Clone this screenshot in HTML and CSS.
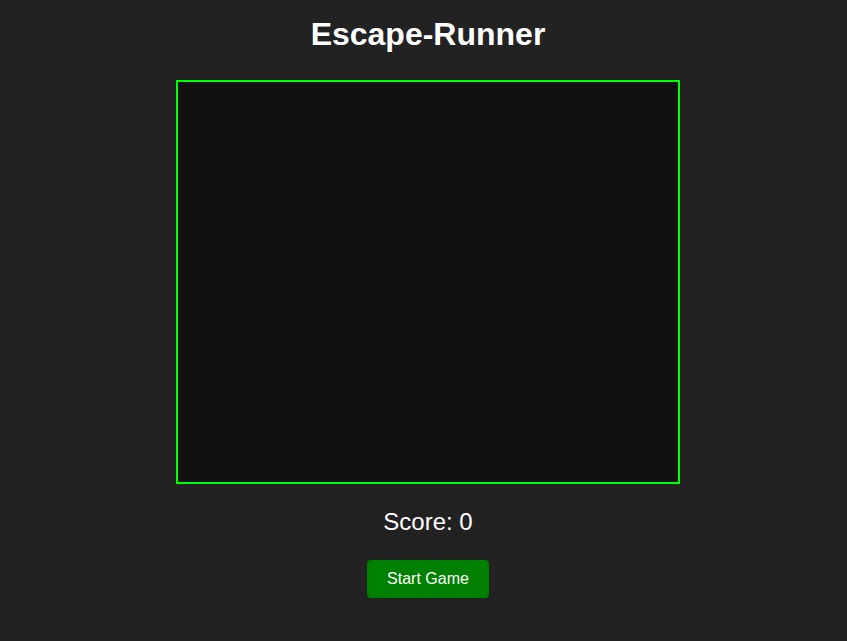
FILE: index.html
```html
<!DOCTYPE html>
<html lang="en">
<head>
<meta charset="utf-8">
<title>Escape-Runner</title>
<link rel="stylesheet" href="styles.css">
</head>
<body>
<main class="game">
  <h1 class="title">Escape-Runner</h1>
  <div class="board"></div>
  <p class="score">Score: 0</p>
  <button class="start">Start Game</button>
</main>
</body>
</html>
```

FILE: styles.css
```css
html, body {
  margin: 0;
  padding: 0;
  background: #222222;
}
body {
  font-family: "Liberation Sans", Arial, sans-serif;
  color: #ffffff;
}
.game {
  display: flex;
  flex-direction: column;
  align-items: center;
  padding-left: 9px;
  padding-top: 16px;
}
.title {
  margin: 0 0 27px;
  font-size: 32px;
  font-weight: bold;
  line-height: normal;
}
.board {
  width: 500px;
  height: 400px;
  background: #111111;
  border: 2px solid #00ff00;
}
.score {
  margin: 24px 0;
  font-size: 24px;
  line-height: normal;
}
.start {
  font-family: "Liberation Sans", Arial, sans-serif;
  font-size: 16px;
  line-height: normal;
  color: #ffffff;
  background: #008000;
  border: none;
  border-radius: 4px;
  padding: 10px 20px;
  cursor: pointer;
}
```
